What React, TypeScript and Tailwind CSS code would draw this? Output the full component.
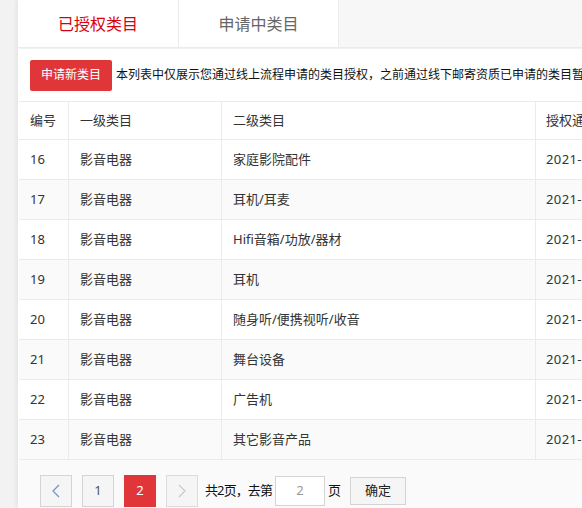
import React from "react";

const rows = [
  ["16", "影音电器", "家庭影院配件"],
  ["17", "影音电器", "耳机/耳麦"],
  ["18", "影音电器", "Hifi音箱/功放/器材"],
  ["19", "影音电器", "耳机"],
  ["20", "影音电器", "随身听/便携视听/收音"],
  ["21", "影音电器", "舞台设备"],
  ["22", "影音电器", "广告机"],
  ["23", "影音电器", "其它影音产品"],
];

export default function App() {
  return (
    <div
      className="w-[582px] h-[508px] overflow-hidden bg-[#f2f2f2] flex"
      style={{ fontFamily: '"Noto Sans", "Noto Sans CJK SC", sans-serif' }}
    >
      <div className="ml-[18px] flex-1 min-w-0 flex flex-col bg-white shadow-[-2px_0_4px_rgba(0,0,0,0.06)]">
        {/* tabs */}
        <div className="flex h-[48px] shrink-0 bg-[#f7f7f7] border-b border-[#ebebeb]">
          <div className="w-[160px] bg-white flex items-center justify-center text-[16px] text-[#d7000f]">
            已授权类目
          </div>
          <div className="w-[161px] bg-white border-l border-r border-[#ebebeb] flex items-center justify-center text-[16px] text-[#666]">
            申请中类目
          </div>
        </div>
        {/* content */}
        <div className="flex-1 flex flex-col ml-px border-t border-[#f2f2f2] bg-white">
          <div className="flex items-center h-[52px] pl-[11px] whitespace-nowrap overflow-hidden">
            <div className="shrink-0 h-[31px] w-[82px] rounded-[2px] bg-[#e0363a] text-white text-[12px] flex items-center justify-center">
              申请新类目
            </div>
            <span className="ml-[4px] text-[12px] text-[#111]">
              本列表中仅展示您通过线上流程申请的类目授权，之前通过线下邮寄资质已申请的类目暂不在此展示
            </span>
          </div>
          <div className="border-t border-[#ebebeb] text-[13px] text-[#333]">
            <div className="flex h-[38px] border-b border-[#ebebeb] bg-white">
              <div className="w-[50px] shrink-0 pl-[11px] flex items-center border-r border-[#ebebeb]">编号</div>
              <div className="w-[153px] shrink-0 pl-[11px] flex items-center border-r border-[#ebebeb]">一级类目</div>
              <div className="w-[314px] shrink-0 pl-[11px] flex items-center border-r border-[#ebebeb]">二级类目</div>
              <div className="flex-1 pl-[10px] flex items-center whitespace-nowrap overflow-hidden">授权通过时间</div>
            </div>
            {rows.map((r, i) => (
              <div
                key={r[0]}
                className={`flex h-[40px] border-b border-[#ebebeb] ${i % 2 === 1 ? "bg-[#fafafa]" : "bg-white"}`}
              >
                <div className="w-[50px] shrink-0 pl-[11px] flex items-center border-r border-[#ebebeb]">{r[0]}</div>
                <div className="w-[153px] shrink-0 pl-[11px] flex items-center border-r border-[#ebebeb]">{r[1]}</div>
                <div className="w-[314px] shrink-0 pl-[11px] flex items-center border-r border-[#ebebeb]">{r[2]}</div>
                <div className="flex-1 pl-[10px] flex items-center whitespace-nowrap overflow-hidden tracking-[0.4px]">2021-06-01</div>
              </div>
            ))}
          </div>
          <div className="flex-1 bg-[#fafafa] flex items-start pt-[15px] pl-[21px] text-[13px] text-[#333] whitespace-nowrap">
            <div className="w-[32px] h-[32px] border border-[#d4d4d4] bg-[#f5f5f5] flex items-center justify-center">
              <svg width="8" height="14" viewBox="0 0 8 14" fill="none">
                <path d="M7 1L1 7l6 6" stroke="#6f92c8" strokeWidth="1.2" />
              </svg>
            </div>
            <div className="ml-[10px] w-[32px] h-[32px] border border-[#d4d4d4] bg-[#f5f5f5] flex items-center justify-center text-[#555]">
              1
            </div>
            <div className="ml-[10px] w-[32px] h-[32px] bg-[#e0363a] flex items-center justify-center text-white">
              2
            </div>
            <div className="ml-[10px] w-[32px] h-[32px] border border-[#dcdcdc] bg-[#f5f5f5] flex items-center justify-center">
              <svg width="8" height="14" viewBox="0 0 8 14" fill="none">
                <path d="M1 1l6 6-6 6" stroke="#d0c8c0" strokeWidth="1.2" />
              </svg>
            </div>
            <div className="ml-[7px] h-[32px] flex items-center text-[#111] tracking-[-0.9px]">共2页，去第</div>
            <div className="ml-[3px] mt-px w-[50px] h-[30px] border border-[#d4d4d4] bg-white flex items-center justify-center text-[#999]">
              2
            </div>
            <div className="ml-[3px] h-[32px] flex items-center text-[#111]">页</div>
            <div className="ml-[9px] mt-[2px] w-[56px] h-[28px] border border-[#d4d4d4] bg-[#f5f5f5] flex items-center justify-center text-[#222]">
              确定
            </div>
          </div>
        </div>
      </div>
    </div>
  );
}
